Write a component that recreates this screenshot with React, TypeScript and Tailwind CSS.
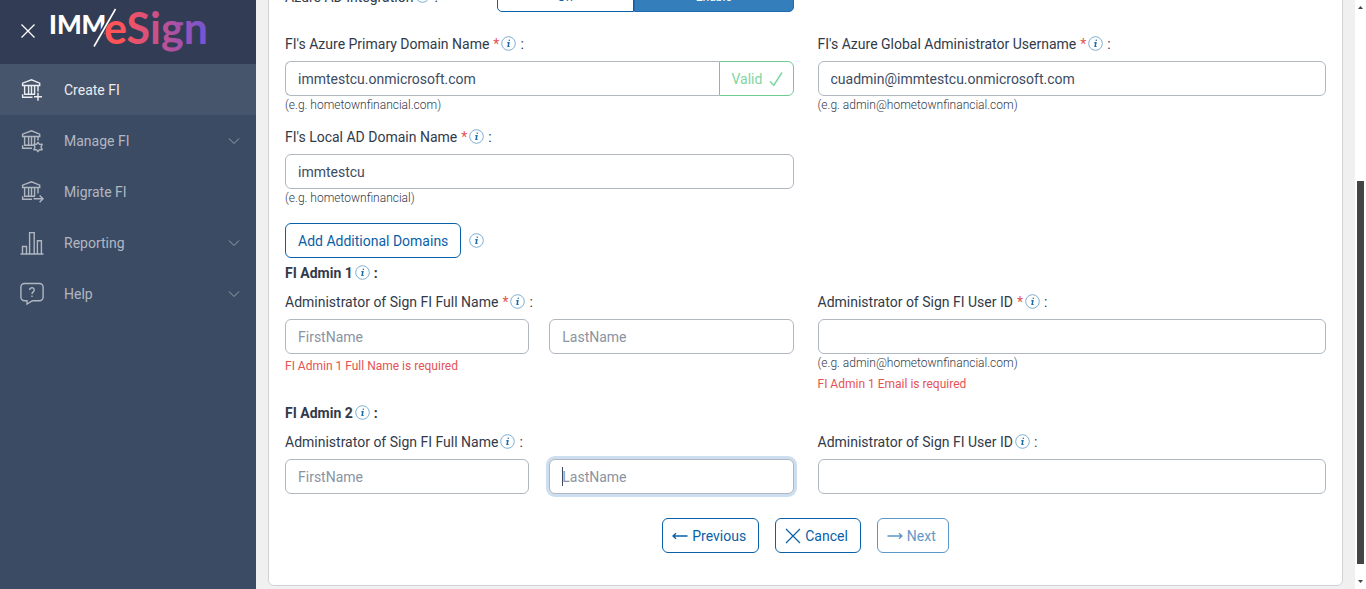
import { useId, type ReactNode } from "react";
import clsx from "clsx";

const BankIcon = ({ children }: { children: ReactNode }) => (
  <svg width="24" height="24" viewBox="0 0 24 24" fill="none" stroke="currentColor" strokeWidth="1.4" aria-hidden="true">
    <path d="M2.6 7.500V5.200L11.500 1.800l8.200 3.400v2.300ZM4.600 7.500v9M8.600 7.500v9M11.500 7.500v9M14.600 7.500v9M4 16.300h11M2.600 19.300v-3" />
    {children}
  </svg>
);

const CreateIcon = () => (
  <BankIcon>
    <path d="M18 7.5v6M2 19.300h10.500M18 14.800v8M14 18.800h8" />
  </BankIcon>
);

const ManageIcon = () => (
  <BankIcon>
    <path d="M18 7.5v4M2 19.300h10" />
    <path d="M18 13.300l1.500 2.100 2.700-.1-1.200 2.700 1.200 2.700-2.700-.1-1.500 2.100-1.500-2.100-2.700.1 1.200-2.700-1.200-2.700 2.700.1Z" strokeLinejoin="round" />
  </BankIcon>
);

const MigrateIcon = () => (
  <BankIcon>
    <path d="M18 7.5v6M2 19.300h10M13.500 18.800h9.500M19.600 15.400l3.400 3.400-3.400 3.400" />
  </BankIcon>
);

const ReportIcon = () => (
  <svg width="24" height="24" viewBox="0 0 24 24" fill="none" stroke="currentColor" strokeWidth="1.4" aria-hidden="true">
    <path d="M.5 23h23M2.5 23v-7.5h4V23M9.6 23V1.6h4.6V23M17.4 23V9.8h4V23" />
  </svg>
);

const HelpIcon = () => (
  <svg width="24" height="24" viewBox="0 0 24 24" fill="none" stroke="currentColor" strokeWidth="1.4" aria-hidden="true">
    <path d="M4.500 1.500h15a3.600 3.600 0 0 1 3.600 3.600v10a3.600 3.600 0 0 1-3.600 3.600h-7L7 22v-3.300H4.500A3.600 3.600 0 0 1 .9 15.100V5.100A3.600 3.600 0 0 1 4.500 1.500Z" />
    <path d="M9.600 8a2.300 2.300 0 1 1 3.600 1.900c-.8.6-1.200.9-1.200 2.200M12 13.500v1.500" />
  </svg>
);

const Chevron = () => (
  <svg width="12" height="12" viewBox="0 0 12 12" fill="none" stroke="currentColor" strokeWidth="1" className="opacity-80" aria-hidden="true">
    <path d="M1 3.500l5 5 5-5" />
  </svg>
);

const NAV = [
  { label: "Create FI", icon: <CreateIcon />, active: true },
  { label: "Manage FI", icon: <ManageIcon />, menu: true },
  { label: "Migrate FI", icon: <MigrateIcon /> },
  { label: "Reporting", icon: <ReportIcon />, menu: true },
  { label: "Help", icon: <HelpIcon />, menu: true },
];

const Logo = () => (
  <svg width="160" height="56" viewBox="0 0 160 56" role="img" aria-label="IMM/eSign">
    <defs>
      <linearGradient id="brand" gradientUnits="userSpaceOnUse" x1="56" y1="0" x2="158" y2="0">
        <stop offset="0.15" stopColor="#ff5457" />
        <stop offset="0.5" stopColor="#c9508a" />
        <stop offset="1" stopColor="#7055d8" />
      </linearGradient>
    </defs>
    <text x="-1" y="31" fontSize="26" fontWeight="900" fill="#fff" className="font-['Lato',sans-serif]">IMM</text>
    <path d="M44 43.500L65.500 6" stroke="#323c54" strokeWidth="5" />
    <path d="M44 43.500L65.500 6" stroke="#fff" strokeWidth="1.600" />
    <text x="54" y="41" fontSize="43" fontWeight="700" fill="url(#brand)" className="font-['Lato',sans-serif]">eSign</text>
  </svg>
);

const Sidebar = () => (
  <aside className="w-64 shrink-0 bg-[#3c4b64] text-[#b1b7c1]">
    <div className="flex h-16 items-center bg-[#323c54] pb-0.5 pl-5">
      <button type="button" aria-label="Close menu" className="w-[30px] text-white">
        <svg width="16" height="16" viewBox="0 0 16 16" fill="none" stroke="currentColor" strokeWidth="1.300">
          <path d="M1.500 1.500l13 13M14.500 1.500l-13 13" />
        </svg>
      </button>
      <Logo />
    </div>
    <nav>
      {NAV.map((item) => (
        <a
          key={item.label}
          href="#"
          className={clsx("flex h-[51px] items-center pr-4 pl-5", item.active && "bg-[#46546c] text-[#ebedef]")}
        >
          <span className="w-11">{item.icon}</span>
          <span className="flex-1">{item.label}</span>
          {item.menu && <Chevron />}
        </a>
      ))}
    </nav>
  </aside>
);

const Info = () => (
  <svg width="15" height="15" viewBox="0 0 15 15" className="shrink-0" aria-hidden="true">
    <circle cx="7.500" cy="7.500" r="6.800" fill="none" stroke="#5e9bc4" strokeWidth="0.800" />
    <path d="M8.200 4.200h.1M6.900 6.700h1l-.8 3.700h.9" fill="none" stroke="#1a6ba8" strokeWidth="1.400" strokeLinecap="round" />
  </svg>
);

const LabelText = ({ text, required }: { text: string; required?: boolean }) => (
  <>
    {text}
    {required && <span className="ml-1 text-[#e55353]">*</span>}
    <span className="mr-1 mb-0.5 ml-0.5"><Info /></span>:
  </>
);

const LABEL = "flex h-5 items-center";
const INPUT =
  "h-[35px] w-full min-w-0 rounded-md border border-[#b1b7c1] bg-white px-3 text-[#3c4b64] placeholder:text-[#8a93a2] outline-none";
const OUTLINE_BTN =
  "flex h-[35px] items-center rounded-md border border-[#0860a8] text-[#0860a8]";
const ICON_BTN = "gap-1 pr-3 pl-[9px]";

const Hint = ({ children }: { children: ReactNode }) => (
  <p className="text-xs leading-[18px] font-light">{children}</p>
);

const FieldError = ({ children }: { children: ReactNode }) => (
  <p className="mt-[3px] text-xs leading-[18px] text-[#e55353]">{children}</p>
);

type FieldProps = {
  label: string;
  required?: boolean;
  value?: string;
  hint?: string;
  error?: string;
  valid?: boolean;
};

const Field = ({ label, required, value, hint, error, valid }: FieldProps) => {
  const id = useId();
  return (
    <div>
      <label htmlFor={id} className={LABEL}>
        <LabelText text={label} required={required} />
      </label>
      <div className="mt-[7px] flex">
        <input id={id} defaultValue={value} className={clsx(INPUT, valid && "rounded-r-none border-r-0")} />
        {valid && (
          <span className="flex h-[35px] w-[75px] shrink-0 items-center justify-between rounded-r-md border border-[#6fcb92] pr-2.5 pl-3 text-[#7fd6a0]">
            Valid
            <svg width="14" height="16" viewBox="0 0 14 16" fill="none" stroke="currentColor" strokeWidth="1.500" aria-hidden="true">
              <path d="M1 10.500l3.800 3.700L13 1.500" />
            </svg>
          </span>
        )}
      </div>
      {hint && <Hint>{hint}</Hint>}
      {error && <FieldError>{error}</FieldError>}
    </div>
  );
};

const NameField = ({ required, error, focused }: { required?: boolean; error?: string; focused?: boolean }) => {
  const id = useId();
  return (
    <div>
      <label htmlFor={id} className={LABEL}>
        <LabelText text="Administrator of Sign FI Full Name" required={required} />
      </label>
      <div className="mt-[7px] grid grid-cols-2 gap-5">
        <input id={id} placeholder="FirstName" className={INPUT} />
        <div className="relative">
          <input
            placeholder="LastName"
            aria-label="Last name"
            className={clsx(INPUT, focused && "border-[#80a9ca] caret-transparent ring-3 ring-[#cddfee]")}
          />
          {focused && <span className="absolute top-2 left-[13px] h-[19px] w-px bg-[#3c4b64]" />}
        </div>
      </div>
      {error && <FieldError>{error}</FieldError>}
    </div>
  );
};

const Scrollbar = () => (
  <div className="flex w-[11px] shrink-0 flex-col items-center justify-between bg-white py-1.5" aria-hidden="true">
    <svg width="5" height="3" viewBox="0 0 5 3" fill="#444"><path d="M0 3h5L2.500 0Z" /></svg>
    <div className="mb-4 flex w-[7px] flex-1 flex-col justify-end">
      <div className="h-[69%] bg-[#444]" />
    </div>
    <svg width="5" height="3" viewBox="0 0 5 3" fill="#444"><path d="M0 0h5L2.500 3Z" /></svg>
  </div>
);

export default function App() {
  return (
    <div className="flex h-screen overflow-hidden bg-[#f0f0f0] font-['Roboto',sans-serif] text-sm text-[#3c4b64]">
      <Sidebar />

      <main className="min-w-0 flex-1 overflow-hidden px-3">
        <form className="-mt-9 rounded-md border border-[#d0d2d6] bg-white px-4 pt-4 pb-8 text-[#323a49]">
          {/* AZURE */}
          <div className="grid grid-cols-2 gap-6">
            <div className="flex items-center">
              <div className="flex w-[212px] shrink-0 items-center">
                <LabelText text="Azure AD Integration" />
              </div>
              <div className="flex h-[31px] flex-1 text-xs">
                <button type="button" className="w-[137px] rounded-l-[5px] border border-[#0860a8] text-[#0860a8]">Off</button>
                <button type="button" className="flex-1 rounded-r-[5px] border border-[#1d6bb0] bg-[#337ebb] text-white">Enable</button>
              </div>
            </div>
          </div>

          <div className="mt-[22px] grid grid-cols-2 gap-x-6 gap-y-[13px]">
            <Field label="FI's Azure Primary Domain Name" required value="immtestcu.onmicrosoft.com" hint="(e.g. hometownfinancial.com)" valid />
            <Field label="FI's Azure Global Administrator Username" required value="cuadmin@immtestcu.onmicrosoft.com" hint="(e.g. admin@hometownfinancial.com)" />
            <Field label="FI's Local AD Domain Name" required value="immtestcu" hint="(e.g. hometownfinancial)" />
          </div>

          <div className="mt-4 flex items-center gap-2">
            <button type="button" className={clsx(OUTLINE_BTN, "px-3")}>Add Additional Domains</button>
            <Info />
          </div>

          {/* ADMINS */}
          <h3 className="mt-[5px] flex h-5 items-center font-bold">
            <LabelText text="FI Admin 1" />
          </h3>
          <div className="mt-[9px] grid grid-cols-2 gap-6">
            <NameField required error="FI Admin 1 Full Name is required" />
            <Field label="Administrator of Sign FI User ID" required hint="(e.g. admin@hometownfinancial.com)" error="FI Admin 1 Email is required" />
          </div>

          <h3 className="mt-2.5 flex h-5 items-center font-bold">
            <LabelText text="FI Admin 2" />
          </h3>
          <div className="mt-[9px] grid grid-cols-2 gap-6">
            <NameField focused />
            <Field label="Administrator of Sign FI User ID" />
          </div>

          {/* ACTIONS */}
          <div className="mt-6 flex justify-center gap-4">
            <button type="button" className={clsx(OUTLINE_BTN, ICON_BTN)}>
              <svg width="16" height="16" viewBox="0 0 16 16" fill="none" stroke="currentColor" strokeWidth="1.300" aria-hidden="true">
                <path d="M15.500 8H1M4 5.200L1 8l3 2.800" />
              </svg>
              Previous
            </button>
            <button type="button" className={clsx(OUTLINE_BTN, ICON_BTN)}>
              <svg width="16" height="16" viewBox="0 0 16 16" fill="none" stroke="currentColor" strokeWidth="1.200" aria-hidden="true">
                <path d="M1 1l14 14M15 1L1 15" />
              </svg>
              Cancel
            </button>
            <button type="button" disabled className={clsx(OUTLINE_BTN, ICON_BTN, "opacity-65")}>
              <svg width="16" height="16" viewBox="0 0 16 16" fill="none" stroke="currentColor" strokeWidth="1.300" aria-hidden="true">
                <path d="M.5 8H15M12 5.200L15 8l-3 2.800" />
              </svg>
              Next
            </button>
          </div>
        </form>
      </main>

      <Scrollbar />
    </div>
  );
}
